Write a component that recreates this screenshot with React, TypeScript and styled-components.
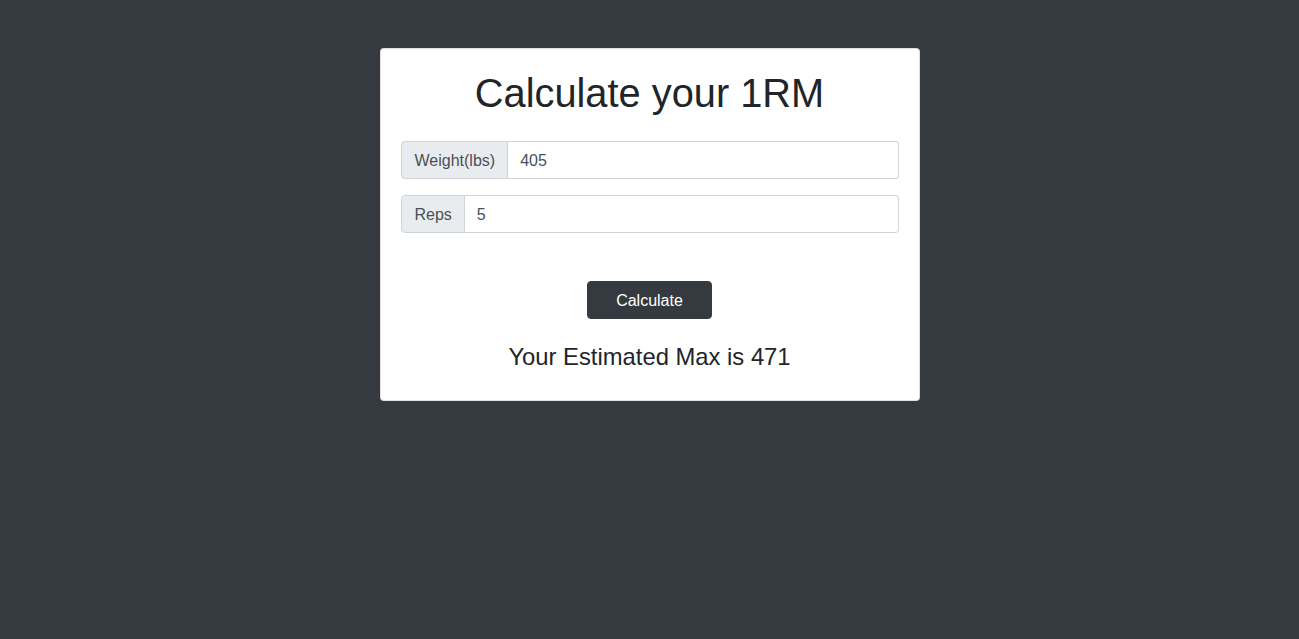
import React from "react";
import styled, { createGlobalStyle } from "styled-components";

const Global = createGlobalStyle`
  html, body { margin: 0; padding: 0; }
  body {
    background: #343a40;
    font-family: "Liberation Sans", Arial, sans-serif;
    color: #212529;
    min-height: 639px;
  }
  * { box-sizing: border-box; }
`;

const Page = styled.div`
  display: flex;
  justify-content: center;
  padding-top: 48px;
`;

const Card = styled.div`
  width: 540px;
  background: #fff;
  border: 1px solid rgba(0, 0, 0, 0.125);
  border-radius: 4px;
  padding: 20px;
  display: flex;
  flex-direction: column;
`;

const Title = styled.h1`
  margin: 0 0 24px;
  font-size: 39.8px;
  font-weight: 400;
  line-height: 48px;
  text-align: center;
  color: #212529;
`;

const InputGroup = styled.div`
  display: flex;
  height: 38px;
  margin-bottom: 16px;
`;

const Addon = styled.span`
  display: flex;
  align-items: center;
  padding: 2px 12px 0 13px;
  background: #e9ecef;
  border: 1px solid #ced4da;
  border-radius: 4px 0 0 4px;
  color: #495057;
  font-size: 16px;
  white-space: nowrap;
`;

const Input = styled.input`
  flex: 1;
  min-width: 0;
  border: 1px solid #ced4da;
  border-left: none;
  border-radius: 0 4px 4px 0;
  padding: 2px 12px 0;
  font-family: inherit;
  font-size: 16px;
  color: #495057;
  outline: none;
`;

const ButtonRow = styled.div`
  display: flex;
  justify-content: center;
  margin-top: 32px;
`;

const Button = styled.button`
  width: 125px;
  height: 38px;
  padding: 2px 0 0;
  background: #343a40;
  border: 1px solid #343a40;
  border-radius: 4px;
  color: #fff;
  font-family: inherit;
  font-size: 16px;
  cursor: pointer;
`;

const Result = styled.h4`
  margin: 23px 0 9px;
  font-size: 23.8px;
  font-weight: 400;
  line-height: 29px;
  text-align: center;
  color: #212529;
`;

export default function App() {
  return (
    <>
      <Global />
      <Page>
        <Card>
          <Title>Calculate your 1RM</Title>
          <InputGroup>
            <Addon>Weight(lbs)</Addon>
            <Input defaultValue="405" />
          </InputGroup>
          <InputGroup>
            <Addon>Reps</Addon>
            <Input defaultValue="5" />
          </InputGroup>
          <ButtonRow>
            <Button>Calculate</Button>
          </ButtonRow>
          <Result>Your Estimated Max is 471</Result>
        </Card>
      </Page>
    </>
  );
}
